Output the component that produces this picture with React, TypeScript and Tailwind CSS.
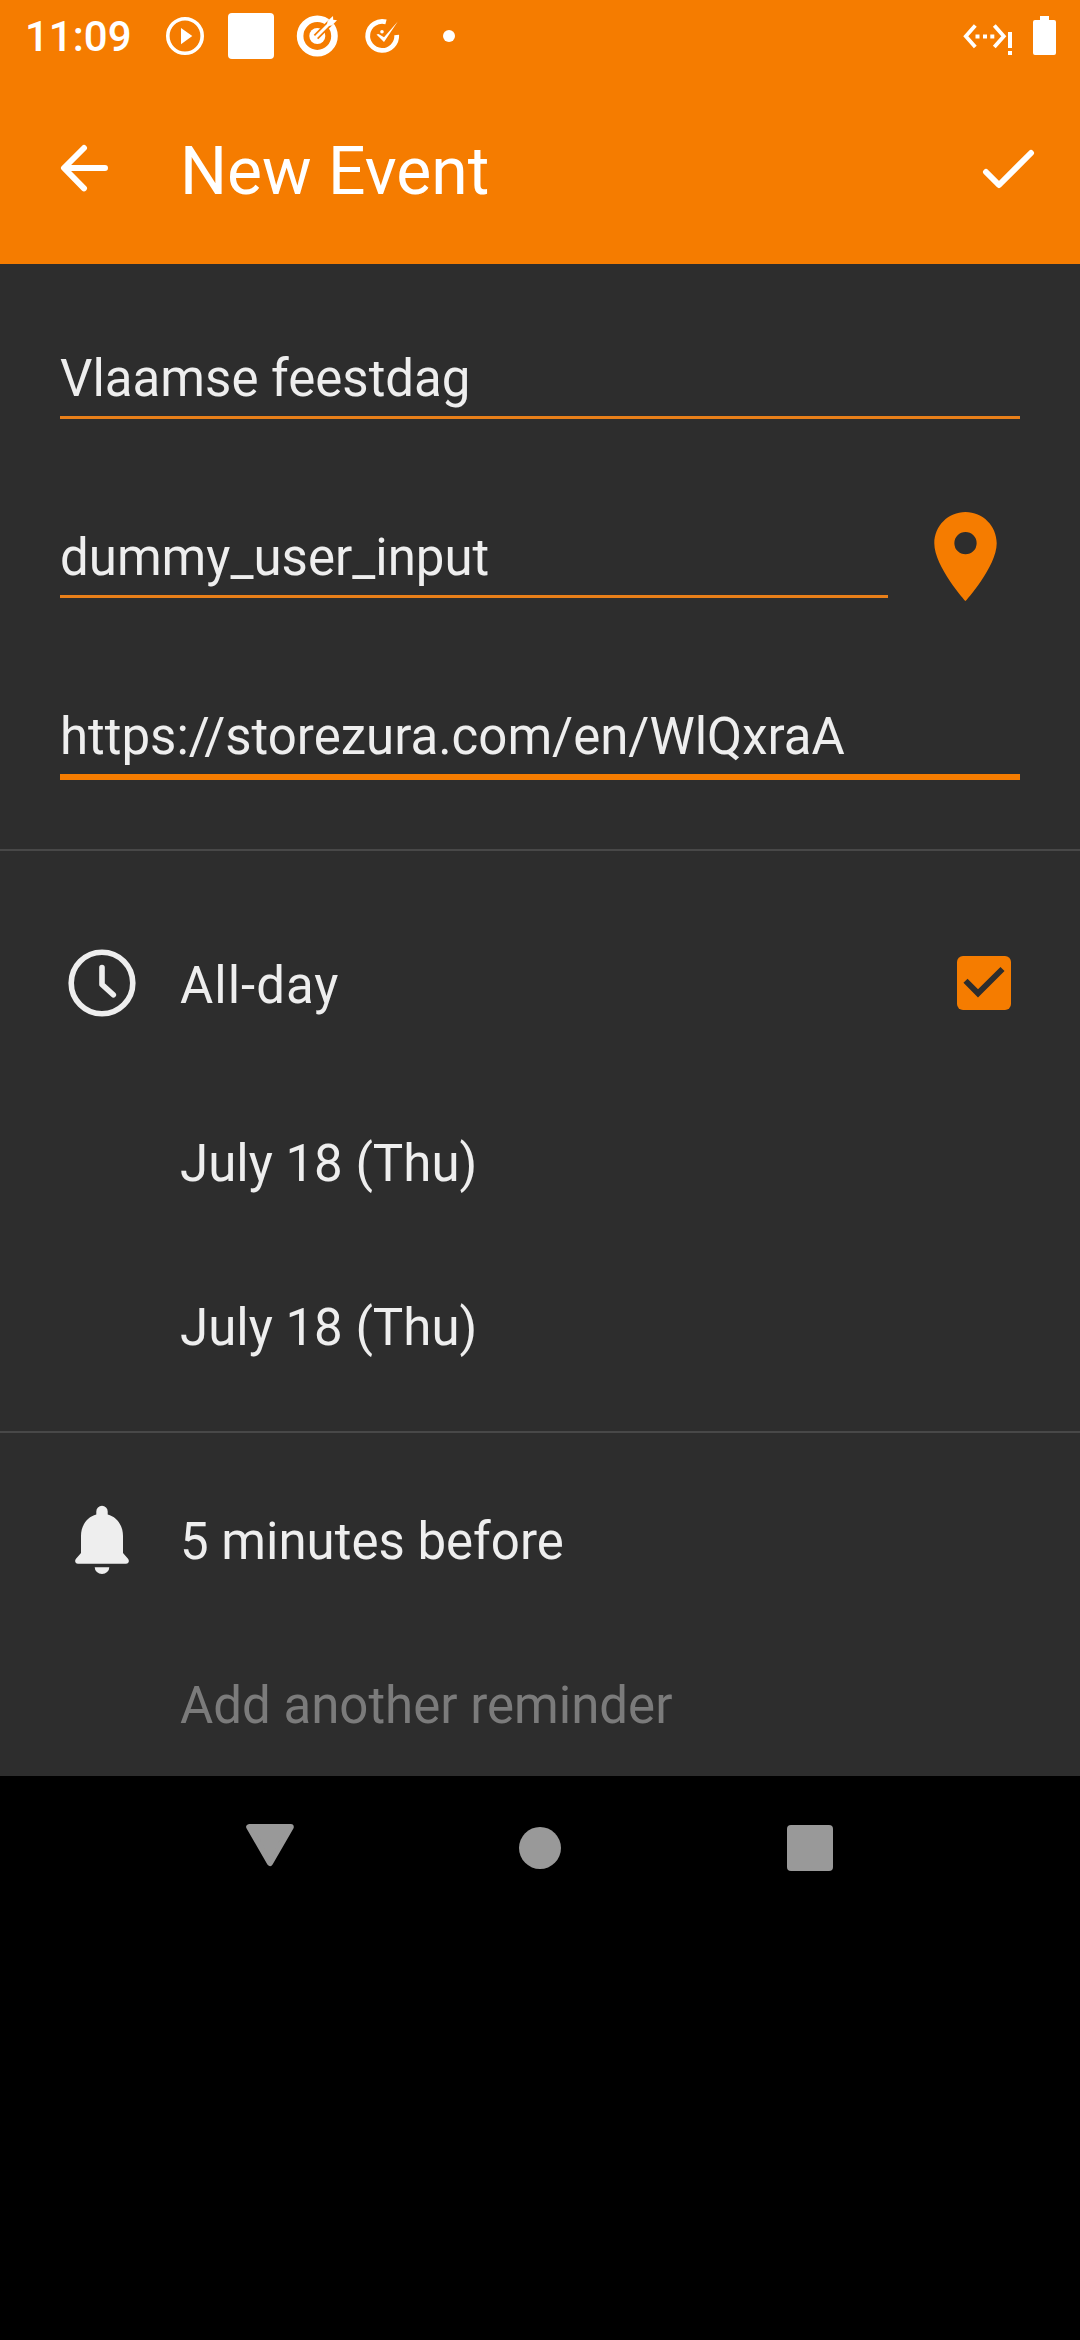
import type { ReactNode } from "react";

function StatusBar() {
  return (
    <div className="flex h-[72px] w-full items-center justify-between text-white">
      <div className="flex h-full items-center">
        <span className="ml-[25px] mt-[2px] w-[135px] text-[42px] font-medium leading-[60px]">11:09</span>
        <svg width="50" height="72" viewBox="160 0 50 72" fill="none">
          <circle cx="185" cy="36" r="17.2" stroke="white" strokeWidth="3.6" />
          <path d="M181 28 L192.3 36 L181 44.3 Z" fill="white" />
        </svg>
        <div className="ml-[18px] h-[46px] w-[46px] rounded-[4px] bg-white" />
        <svg className="ml-[17px]" width="52" height="72" viewBox="291 0 52 72" fill="none">
          <circle cx="317.3" cy="36" r="17.2" stroke="white" strokeWidth="6.6" />
          <circle cx="317.3" cy="36" r="8" fill="white" />
          <path d="M316 37 L334 19" stroke="#f57c00" strokeWidth="6.4" />
          <path d="M316.5 36.5 L330 23" stroke="white" strokeWidth="3" strokeLinecap="round" />
          <path d="M327 26 L327.5 21 L333 16 L333.2 19.8 L337 20.2 L332 25.4 Z" fill="white" />
        </svg>
        <svg className="ml-[17px]" width="46" height="72" viewBox="360 0 46 72" fill="none">
          <path d="M386 21.9 A14.5 14.5 0 1 0 396.7 35" stroke="white" strokeWidth="4.8" />
          <circle cx="382" cy="31.8" r="1.8" fill="white" />
          <path d="M376.5 34.5 L378.5 34 L384 37.2 L397.8 21.5 L384 42 Z" fill="white" />
        </svg>
        <div className="ml-[37px] h-[12px] w-[12px] rounded-full bg-white" />
      </div>
      <div className="mr-[24px] flex h-full items-center">
        <svg width="52" height="72" viewBox="962 0 52 72" fill="none">
          <path d="M975.3 25.5 L965.8 36.3 L975.3 47 M994.3 25.5 L1003.8 36.3 L994.3 47" stroke="white" strokeWidth="3.8" />
          <path d="M975.5 34.5h4v4h-4z M983 34.5h4v4h-4z M990.3 34.5h4v4h-4z M1008 32h4v16h-4z M1008 51h4v4h-4z" fill="white" />
        </svg>
        <svg className="ml-[18px]" width="24" height="72" viewBox="1032 0 24 72">
          <path d="M1040 16h9v4h5a2 2 0 0 1 2 2v31a2 2 0 0 1-2 2h-19a2 2 0 0 1-2-2v-31a2 2 0 0 1 2-2h5z" fill="white" />
        </svg>
      </div>
    </div>
  );
}

function AppBar() {
  return (
    <div className="flex h-[192px] w-full items-center pl-[60px] pr-[45px] text-white">
      <svg width="50" height="50" viewBox="60 143 50 50" fill="none" stroke="white" strokeWidth="6" strokeLinecap="round" strokeLinejoin="round">
        <path d="M105 168 H64.5 M84 148 L64 168 L84 188.3" />
      </svg>
      <h1 className="ml-[70px] mt-[7px] flex-1 text-[66px] font-normal leading-[80px]">New Event</h1>
      <svg width="54" height="50" viewBox="981 143 54 50" fill="none" stroke="white" strokeWidth="6" strokeLinecap="round" strokeLinejoin="round">
        <path d="M986 172 L999 185 L1031 153" />
      </svg>
    </div>
  );
}

function Field({ value, active = false }: { value: string; active?: boolean }) {
  return (
    <div
      className={
        active
          ? "w-full border-b-[6px] border-[#f57c00] pb-[7px] leading-[60px]"
          : "w-full border-b-[3px] border-[#e87f19] pb-[7px] leading-[60px]"
      }
    >
      {value}
    </div>
  );
}

function Row({ icon, children, muted = false }: { icon?: ReactNode; children: ReactNode; muted?: boolean }) {
  return (
    <div className="flex h-[164px] shrink-0 items-center pl-[62px]">
      <div className="flex w-[80px] justify-center">{icon}</div>
      <span className={muted ? "ml-[38px] text-[#7b7b7b]" : "ml-[38px]"}>{children}</span>
    </div>
  );
}

function Clock() {
  return (
    <svg width="80" height="80" viewBox="62 943 80 80" fill="none" stroke="#eeeeee" strokeLinecap="round" strokeLinejoin="round">
      <circle cx="102" cy="983" r="30.8" strokeWidth="5.6" />
      <path d="M102 967.5 V984.5 L113.3 994.8" strokeWidth="5.6" />
    </svg>
  );
}

function Bell() {
  return (
    <svg width="80" height="80" viewBox="62 1502 80 80" fill="#eeeeee">
      <path d="M96.3 1514.5 V1511.5 A5.7 5.7 0 0 1 107.7 1511.5 V1514.5 C117 1517 123 1525.5 123 1536 V1553 L127.8 1558.5 C130 1561 128.5 1563.7 126 1563.7 H78 C75.5 1563.7 74 1561 76.2 1558.5 L81 1553 V1536 C81 1525.5 87 1517 96.3 1514.5 Z" />
      <path d="M94.7 1567.2 H109.3 A7.3 6.8 0 0 1 94.7 1567.2 Z" />
    </svg>
  );
}

export default function App() {
  return (
    <div className="h-[2340px] w-[1080px] overflow-hidden bg-black font-['Roboto',sans-serif]">
      <header className="h-[264px] bg-[#f57c00]">
        <StatusBar />
        <AppBar />
      </header>

      <main className="flex h-[1512px] flex-col overflow-hidden bg-[#2d2d2d] text-[51px] leading-[60px] text-[#eeeeee]">
        <section className="h-[587px] shrink-0 border-b-2 border-[#484848] px-[60px] pt-[85px]">
          <Field value="Vlaamse feestdag" />
          <div className="mt-[84px] flex h-[107px] items-start">
            <div className="w-[828px] pt-[25px]">
              <Field value="dummy_user_input" />
            </div>
            <svg className="ml-[24px]" width="107" height="107" viewBox="0 0 24 24" fill="#f57c00">
              <path d="M12 2C8.13 2 5 5.13 5 9c0 5.25 7 13 7 13s7-7.75 7-13c0-3.87-3.13-7-7-7zm0 9.5a2.5 2.5 0 0 1 0-5 2.5 2.5 0 0 1 0 5z" />
            </svg>
          </div>
          <div className="mt-[97px]">
            <Field value="https://storezura.com/en/WlQxraA" active />
          </div>
        </section>

        <section className="h-[582px] shrink-0 border-b-2 border-[#484848] pt-[75px]">
          <div className="mb-[42px] flex h-[114px] items-center pl-[62px] pr-[69px]">
            <Clock />
            <span className="ml-[38px] flex-1 pt-[5px] tracking-[1px]">All-day</span>
            <div className="h-[54px] w-[54px] rounded-[6px] bg-[#f57c00]">
              <svg width="54" height="54" viewBox="957 956 54 54" fill="none" stroke="#2d2d2d" strokeWidth="5.8">
                <path d="M965.5 980.8 L978 993.3 L1002.5 969" />
              </svg>
            </div>
          </div>
          <Row>July 18 (Thu)</Row>
          <Row>July 18 (Thu)</Row>
        </section>

        <section className="pt-[27px]">
          <Row icon={<Bell />}>5 minutes before</Row>
          <Row muted>Add another reminder</Row>
        </section>
      </main>

      <nav className="grid h-[144px] grid-cols-3 items-center justify-items-center px-[135px]">
        <svg width="50" height="50" viewBox="245 1820 50 50" fill="#999999" stroke="#999999" strokeWidth="6" strokeLinejoin="round">
          <path d="M249.2 1824 H290.8 L270 1860 Z" />
        </svg>
        <div className="h-[42px] w-[42px] rounded-full bg-[#999999]" />
        <div className="h-[46px] w-[46px] rounded-[4px] bg-[#999999]" />
      </nav>
    </div>
  );
}
